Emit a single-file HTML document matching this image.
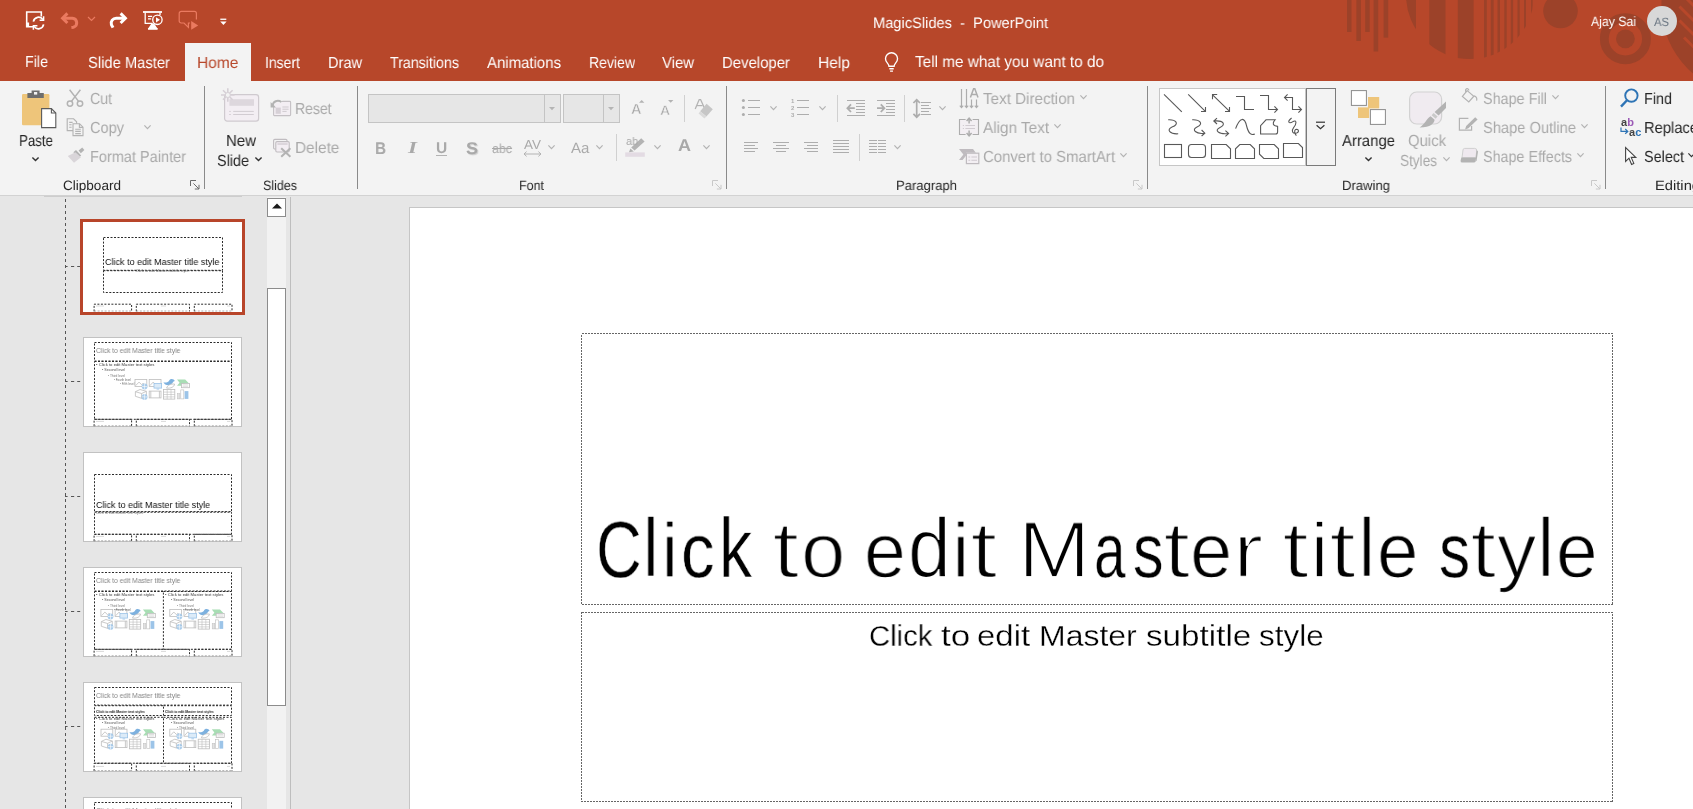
<!DOCTYPE html>
<html><head><meta charset="utf-8"><title>MagicSlides - PowerPoint</title>
<style>
html,body{margin:0;padding:0;}
body{width:1693px;height:809px;overflow:hidden;background:#E6E6E6;font-family:"Liberation Sans",sans-serif;}
#root{position:relative;width:1693px;height:809px;overflow:hidden;}
.a{position:absolute;}
.t,.t2{will-change:transform;position:absolute;white-space:nowrap;line-height:1;transform-origin:0 50%;display:inline-block;}
.sep{position:absolute;width:1px;background:#8a8a8a;top:86px;height:103px;}
.msep{position:absolute;width:1px;background:#d0d0d0;}
svg{position:absolute;overflow:visible;}
.gp{text-rendering:geometricPrecision;}
</style></head><body><div id="root">
<div class="a" style="left:0;top:0;width:1693px;height:81px;background:#B7472A;"></div>
<div class="a" style="left:0;top:81px;width:1693px;height:114px;background:#F3F3F3;"></div>
<div class="a" style="left:0;top:195px;width:1693px;height:1px;background:#d2d2d2;z-index:2;"></div>
<div class="a" style="left:185px;top:43px;width:66px;height:39px;background:#F3F3F3;"></div>
<div class="sep" style="left:204px;"></div>
<div class="sep" style="left:357px;"></div>
<div class="sep" style="left:726px;"></div>
<div class="sep" style="left:1147px;"></div>
<div class="sep" style="left:1605px;"></div>
<div class="a" style="left:0;top:195px;width:1693px;height:614px;background:#E6E6E6;"></div>
<div class="a" style="left:409px;top:207px;width:1290px;height:610px;background:#fff;border:1px solid #c6c6c6;box-sizing:border-box;"></div>
<svg style="left:0;top:0" width="1693" height="809" fill="none" stroke="#666" stroke-width="1" shape-rendering="crispEdges"><rect x="581.5" y="333.5" width="1031" height="271" stroke-dasharray="2 1"/><rect x="581.5" y="612.5" width="1031" height="189" stroke-dasharray="2 1"/></svg>
<div class="a" style="left:290px;top:197px;width:1px;height:612px;background:#bebebe;"></div>
<div class="a" style="left:267px;top:197px;width:19px;height:612px;background:#f2f2f2;"></div>
<div class="a" style="left:267px;top:198px;width:19px;height:19px;background:#fff;border:1px solid #8c8c8c;box-sizing:border-box;"></div>
<svg style="left:271.6px;top:203px" width="10" height="6"><path d="M0 5.6 L5 0.4 L10 5.6Z" fill="#1a1a1a"/></svg>
<div class="a" style="left:267px;top:288px;width:19px;height:417.6px;background:#fff;border:1px solid #8c8c8c;box-sizing:border-box;"></div>
<svg style="left:1300px;top:0" width="393" height="81" viewBox="1300 0 393 81"><g fill="#9C4229"><rect x="1347" y="0" width="4.5" height="32"/><rect x="1356.4" y="0" width="4.5" height="41"/><rect x="1365.2" y="0" width="4.5" height="32"/><rect x="1373.6" y="0" width="4.6" height="51.5"/><rect x="1383.6" y="0" width="4.6" height="37.6"/><clipPath id="cc"><circle cx="1470" cy="-5" r="64"/></clipPath><g clip-path="url(#cc)"><rect x="1400" y="0" width="16.0" height="70"/><rect x="1429.3" y="0" width="16.2" height="70"/><rect x="1457.8" y="0" width="15.8" height="70"/><rect x="1484" y="0" width="2.8" height="70"/><rect x="1490.8" y="0" width="2.8" height="70"/><rect x="1497.5" y="0" width="2.5" height="70"/><rect x="1504.3" y="0" width="2.4" height="70"/><rect x="1510.8" y="0" width="2.3" height="70"/><rect x="1517.5" y="0" width="2.2" height="70"/><rect x="1524" y="0" width="2.0" height="70"/><rect x="1531" y="0" width="1.7" height="70"/></g><circle cx="1560.5" cy="11" r="17.3"/><circle cx="1625.4" cy="38.8" r="21.1" fill="none" stroke="#9C4229" stroke-width="8.8"/><circle cx="1625.4" cy="38.8" r="9.4"/><clipPath id="c2"><rect x="1640" y="0" width="53" height="81"/></clipPath><g clip-path="url(#c2)"><circle cx="1751.4" cy="5" r="90"/><g stroke="#B7472A" stroke-width="3"><line x1="1686" y1="-2" x2="1700" y2="12"/><line x1="1679.5" y1="6.5" x2="1700" y2="27"/><line x1="1679.5" y1="20.5" x2="1700" y2="41"/><line x1="1684" y1="37.5" x2="1700" y2="53.5"/></g></g></g></svg>
<div class="a" style="left:1646.5px;top:5.5px;width:30.5px;height:30.5px;border-radius:50%;background:#D8D8D8;"></div>
<svg style="left:25px;top:11px" width="22" height="20" viewBox="0 0 22 20" fill="none" stroke="#ffffff" stroke-width="1.4">
<path d="M8 15.8 H1.7 V1 H16.3 V5.6" stroke-width="1.6"/><path d="M2.6 11.5 V15.8" stroke-width="3"/>
<path d="M8.4 10.6 A5.2 5.2 0 0 1 17.9 8.6" stroke-width="1.7"/><path d="M18.6 5.2 V9.2 H14.6" stroke-width="1.5"/>
<path d="M18.6 13.4 A5.2 5.2 0 0 1 9.1 15.4" stroke-width="1.7"/><path d="M8.4 18.8 V14.8 H12.4" stroke-width="1.5"/>
</svg>
<svg style="left:60px;top:12px" width="20" height="17" viewBox="0 0 20 17" fill="none" stroke="#EA7A60" stroke-width="3">
<path d="M7.4 1.4 L2.6 6.2 L7.4 11"/><path d="M3.4 6.2 H12.4 A4.6 4.6 0 0 1 13.4 15.2 L11.4 15.4"/></svg>
<svg style="left:87px;top:16px" width="9" height="6" viewBox="0 0 9 6" fill="none" stroke="#EA7A60" stroke-width="1.2"><path d="M1 1 L4.5 4.5 L8 1"/></svg>
<svg style="left:108px;top:12px" width="20" height="17" viewBox="0 0 20 17" fill="none" stroke="#ffffff" stroke-width="3">
<path d="M12.6 1.4 L17.4 6.2 L12.6 11"/><path d="M16.6 6.2 H8.2 A5 5 0 0 0 3.4 12.6 L5 15.6"/></svg>
<svg style="left:142px;top:11px" width="22" height="20" viewBox="0 0 22 20" fill="none" stroke="#ffffff" stroke-width="1.3">
<path d="M1 1 H20" stroke-width="1.8"/><path d="M3.2 1.6 V12.4 H10.6"/><path d="M18 1.6 V4"/>
<path d="M6 5.4 H10.2 M6 7.8 H9.2"/>
<circle cx="15.4" cy="8.8" r="4.7"/><path d="M14 6.2 L18 8.8 L14 11.4Z" fill="#ffffff" stroke="none"/>
<path d="M10.2 12.6 L7 17.4 H14.6 L11.4 12.6" fill="#ffffff"/><path d="M6 18 H15.6" stroke-width="1.6"/></svg>
<svg style="left:178px;top:10px" width="22" height="21" viewBox="0 0 22 21" fill="none" stroke="#EA7A60" stroke-width="1.2">
<path d="M12 13 H10.4 V17.4 L6 13 H3.2 A2 2 0 0 1 1.2 11 V3.4 A2 2 0 0 1 3.2 1.4 H16.4 A2 2 0 0 1 18.4 3.4 V9.6"/>
<path d="M13.2 11 L20.2 15.4 L13.2 19.8Z" fill="#EA7A60" stroke="none"/></svg>
<svg style="left:220px;top:18px" width="7" height="8" viewBox="0 0 7 8"><rect x="0.3" y="0.6" width="6" height="1.3" fill="#ffffff"/><path d="M0.2 3.6 H6.6 L3.4 7Z" fill="#ffffff"/></svg>
<svg style="left:883.6px;top:52px" width="15.6" height="21" viewBox="0 0 17 23" fill="none" stroke="#ffffff" stroke-width="1.5">
<path d="M5.4 15.6 C5.4 12.6 1.6 11.6 1.6 7.4 A6.6 6.6 0 0 1 14.8 7.4 C14.8 11.6 11 12.6 11 15.6 Z"/><path d="M5.8 18.4 H10.6 M6.6 21 H9.8"/></svg>
<svg style="left:20px;top:88px" width="38" height="42" viewBox="0 0 38 42">
<rect x="2" y="6" width="27.4" height="31.2" rx="1.2" fill="#EEC57A"/>
<path d="M7.4 10 V5 H11.6 V2.4 H19.6 V5 H23.8 V10Z" fill="#6E6E6E"/><rect x="14" y="4" width="3.2" height="2.6" fill="#F3F3F3"/>
<path d="M21.6 20.6 H31.4 L35.8 25 V39.6 H21.6Z" fill="#fff" stroke="#5A5A5A" stroke-width="1.1"/><path d="M31.4 20.6 V25 H35.8" fill="none" stroke="#5A5A5A" stroke-width="1.1"/>
</svg>
<svg style="left:31.9px;top:157.1px" width="7" height="4.6" viewBox="0 0 7 4.6" fill="none" stroke="#333" stroke-width="1.4"><path d="M0.4 0.4 L3.5 3.6 L6.6 0.4"/></svg>
<svg style="left:66px;top:89px" width="18" height="19" viewBox="0 0 18 19" fill="none" stroke="#B3B3B3" stroke-width="1.5">
<path d="M3.6 0.8 L12.6 12.4 M14.4 0.8 L5.4 12.4"/><circle cx="4" cy="14.6" r="2.7"/><circle cx="14" cy="14.6" r="2.7"/></svg>
<svg style="left:66px;top:118px" width="19" height="19" viewBox="0 0 19 19" fill="#F3F3F3" stroke="#B3B3B3" stroke-width="1.1">
<path d="M1.2 0.8 H7.6 L10.6 3.8 V12.6 H1.2Z"/><path d="M3.2 4.4 H6.6 M3.2 6.8 H5.6 M3.2 9.2 H5.6" />
<path d="M7 5.8 H13.6 L17 9.2 V17.6 H7Z"/><path d="M13.4 5.8 V9.4 H17" fill="none"/><path d="M9.2 11.2 H14.8 M9.2 13.4 H14.8 M9.2 15.6 H14.8"/></svg>
<svg style="left:143.8px;top:125.1px" width="7" height="4.6" viewBox="0 0 7 4.6" fill="none" stroke="#B3B3B3" stroke-width="1.2"><path d="M0.4 0.4 L3.5 3.6 L6.6 0.4"/></svg>
<svg style="left:67px;top:147px" width="18" height="17" viewBox="0 0 18 17">
<path d="M11.6 3.6 L15.2 0.6 L17.4 3 L13.8 6.2Z" fill="#B3B3B3"/><path d="M6.4 5.2 L9 3 L14.2 8.6 L11.6 10.8Z" fill="#B3B3B3"/>
<path d="M8.4 5.2 L14 10.2 L7 15.8 L0.8 9Z" fill="#D9D5D9"/></svg>
<svg style="left:190px;top:180px" width="10" height="10" viewBox="0 0 10 10" fill="none" stroke="#6a6a6a" stroke-width="1"><path d="M0.5 6 V0.5 H6"/><path d="M3.4 3.4 L9 9 M9 4.8 V9 H4.8"/></svg>
<svg style="left:220px;top:87px" width="41" height="36" viewBox="0 0 41 36">
<rect x="4.6" y="7.6" width="34" height="26.6" rx="2.6" fill="#F3EEF3" stroke="#CFCACF" stroke-width="1.2"/>
<rect x="9.4" y="12.2" width="24.6" height="6.6" fill="#DDD7DD"/>
<path d="M9.2 24.4 H10.8 M13.2 24.4 H33.8 M9.2 27.5 H10.8 M13.2 27.5 H33.8" stroke="#D2CCD2" stroke-width="1"/>
<g stroke="#D6D0D6" stroke-width="1.6"><path d="M7.8 1.2 V14.8 M1 8 H14.6 M3 3.2 L12.6 12.8 M12.6 3.2 L3 12.8"/></g><circle cx="7.8" cy="8" r="2.5" fill="#F3F3F3" stroke="#D6D0D6" stroke-width="1"/>
</svg>
<svg style="left:254.9px;top:157.1px" width="7" height="4.6" viewBox="0 0 7 4.6" fill="none" stroke="#333" stroke-width="1.4"><path d="M0.4 0.4 L3.5 3.6 L6.6 0.4"/></svg>
<svg style="left:270px;top:98px" width="22" height="19" viewBox="0 0 22 19" fill="none" stroke="#B3B3B3" stroke-width="1.1">
<rect x="3.6" y="3.4" width="17" height="14.2" rx="0.8" fill="#F3EEF3" stroke="#C4C0C4"/>
<rect x="5.6" y="9.6" width="5.2" height="6.2" fill="#D6D0D6" stroke="none"/>
<path d="M12.4 9 H18.6 M12.4 11.2 H18.6 M12.4 13.4 H16.6" stroke="#CFCACF" stroke-width="1"/>
<path d="M2.4 7.2 C2.8 2.8 7.6 0.8 11.6 3.6" stroke="#F3F3F3" stroke-width="4"/>
<path d="M2.6 7.6 C3 3.4 7.6 1.4 11.4 4" stroke-width="1.9"/><path d="M0.6 4 V9.4 H6Z" fill="#B3B3B3" stroke="none"/></svg>
<svg style="left:272px;top:138px" width="21" height="20" viewBox="0 0 21 20" fill="none" stroke="#C0BCC0" stroke-width="1.1">
<rect x="1.6" y="1.4" width="13.4" height="9.6" rx="1.2" fill="#F3F3F3"/>
<rect x="3.8" y="3.6" width="13.4" height="10.4" rx="1.2" fill="#F3EEF3"/><path d="M5.4 6 H15.6" stroke="#D6D0D6" stroke-width="1.6"/>
<path d="M9.2 10.2 L18.4 18.8 M18.4 10.2 L9.2 18.8" stroke="#B3B3B3" stroke-width="2"/></svg>
<div class="a" style="left:368px;top:94px;width:191px;height:26.5px;background:#E6E6E6;border:1px solid #C4C4C4;"></div>
<div class="a" style="left:544px;top:95px;width:1px;height:26.5px;background:#C4C4C4;"></div>
<div class="a" style="left:563px;top:94px;width:55px;height:26.5px;background:#E6E6E6;border:1px solid #C4C4C4;"></div>
<div class="a" style="left:603px;top:95px;width:1px;height:26.5px;background:#C4C4C4;"></div>
<svg style="left:548.9px;top:107.4px" width="6" height="3.4" viewBox="0 0 6 3.4"><path d="M0 0 H6 L3 3.2Z" fill="#B4B4B4"/></svg>
<svg style="left:607.9px;top:107.4px" width="6" height="3.4" viewBox="0 0 6 3.4"><path d="M0 0 H6 L3 3.2Z" fill="#B4B4B4"/></svg>
<svg style="left:639.4px;top:99.6px" width="5.4" height="2.8"><path d="M0 2.8 L2.7 0 L5.4 2.8Z" fill="#B3B3B3"/></svg>
<svg style="left:668.2px;top:100.2px" width="5.4" height="2.8"><path d="M0 0 H5.4 L2.7 2.8Z" fill="#B3B3B3"/></svg>
<div class="msep" style="left:684px;top:95px;height:27px;"></div>
<svg style="left:694px;top:98px" width="20" height="21" viewBox="0 0 20 21">
<path d="M1.2 11 L5.2 1.6 H6.6 L10.4 10" fill="none" stroke="#B3B3B3" stroke-width="1.3"/><path d="M3 7.6 H8.6" stroke="#B3B3B3" stroke-width="1.2"/>
<path d="M12.6 5.8 L18.8 11.2 L12.4 18.6 L6.2 13.2Z" fill="#C6C6C6"/><path d="M6.2 13.2 L12.4 18.6 L10.4 20.6 L4.6 15.4Z" fill="#DADADA"/></svg>
<div class="a" style="left:436px;top:155.2px;width:11px;height:1.2px;background:#B3B3B3;"></div>
<svg style="left:523px;top:150.6px" width="19" height="6" viewBox="0 0 19 6" fill="none" stroke="#B3B3B3" stroke-width="1"><path d="M1 3 H18 M3.6 0.6 L1 3 L3.6 5.4 M15.4 0.6 L18 3 L15.4 5.4"/></svg>
<svg style="left:547.9px;top:144.9px" width="7" height="4.6" viewBox="0 0 7 4.6" fill="none" stroke="#B3B3B3" stroke-width="1.2"><path d="M0.4 0.4 L3.5 3.6 L6.6 0.4"/></svg>
<svg style="left:595.8px;top:144.9px" width="7" height="4.6" viewBox="0 0 7 4.6" fill="none" stroke="#B3B3B3" stroke-width="1.2"><path d="M0.4 0.4 L3.5 3.6 L6.6 0.4"/></svg>
<div class="msep" style="left:616px;top:134px;height:27px;"></div>
<svg style="left:625px;top:137px" width="21" height="21" viewBox="0 0 21 21">
<rect x="0.2" y="15.4" width="19.6" height="4.4" fill="#E3DBE3"/>
<path d="M16.2 1.2 L19.6 4.4 L9.6 13.6 L6.2 10.6Z" fill="#B3B3B3"/><path d="M5.4 11.4 L8.8 14.4 L4 15.2Z" fill="#B3B3B3"/></svg>
<svg style="left:653.5px;top:144.9px" width="7" height="4.6" viewBox="0 0 7 4.6" fill="none" stroke="#B3B3B3" stroke-width="1.2"><path d="M0.4 0.4 L3.5 3.6 L6.6 0.4"/></svg>
<svg style="left:702.7px;top:144.9px" width="7" height="4.6" viewBox="0 0 7 4.6" fill="none" stroke="#B3B3B3" stroke-width="1.2"><path d="M0.4 0.4 L3.5 3.6 L6.6 0.4"/></svg>
<svg style="left:712px;top:180px" width="10" height="10" viewBox="0 0 10 10" fill="none" stroke="#C8C8C8" stroke-width="1"><path d="M0.5 6 V0.5 H6"/><path d="M3.4 3.4 L9 9 M9 4.8 V9 H4.8"/></svg>
<svg style="left:0;top:0" width="1693" height="200" fill="none" stroke="#ADADAD" stroke-width="1" shape-rendering="crispEdges"><path d="M748 100.5 H760 M748 107.5 H760 M748 114.5 H760"/></svg>
<svg style="left:0;top:0" width="800" height="200" fill="#ADADAD"><circle cx="743.4" cy="100.5" r="1.5"/><circle cx="743.4" cy="107.5" r="1.5"/><circle cx="743.4" cy="114.5" r="1.5"/></svg>
<svg style="left:769.8px;top:106.1px" width="7" height="4.6" viewBox="0 0 7 4.6" fill="none" stroke="#B3B3B3" stroke-width="1.2"><path d="M0.4 0.4 L3.5 3.6 L6.6 0.4"/></svg>
<svg style="left:0;top:0" width="1693" height="200" fill="none" stroke="#ADADAD" stroke-width="1" shape-rendering="crispEdges"><path d="M797 100.5 H809 M797 107.5 H809 M797 114.5 H809"/></svg>
<span class="t2" style="left:790.6px;top:97.8px;font-size:6px;color:#ADADAD;font-weight:bold;">1</span>
<span class="t2" style="left:790.6px;top:104.8px;font-size:6px;color:#ADADAD;font-weight:bold;">2</span>
<span class="t2" style="left:790.6px;top:111.8px;font-size:6px;color:#ADADAD;font-weight:bold;">3</span>
<svg style="left:818.8px;top:106.1px" width="7" height="4.6" viewBox="0 0 7 4.6" fill="none" stroke="#B3B3B3" stroke-width="1.2"><path d="M0.4 0.4 L3.5 3.6 L6.6 0.4"/></svg>
<div class="msep" style="left:837px;top:95px;height:27px;"></div>
<svg style="left:0;top:0" width="1693" height="200" fill="none" stroke="#ADADAD" stroke-width="1" shape-rendering="crispEdges"><path d="M847 100.5 H865 M856 103.5 H865 M856 106.5 H865 M856 109.5 H865 M856 112.5 H865 M847 115.5 H865"/></svg>
<svg style="left:846px;top:103px" width="10" height="11" viewBox="0 0 10 11" fill="none" stroke="#ADADAD" stroke-width="1.8"><path d="M8.8 5.2 H2 M5 1.4 L1.4 5.2 L5 9"/></svg>
<svg style="left:0;top:0" width="1693" height="200" fill="none" stroke="#ADADAD" stroke-width="1" shape-rendering="crispEdges"><path d="M877 100.5 H895 M886 103.5 H895 M886 106.5 H895 M886 109.5 H895 M886 112.5 H895 M877 115.5 H895"/></svg>
<svg style="left:876px;top:103px" width="10" height="11" viewBox="0 0 10 11" fill="none" stroke="#ADADAD" stroke-width="1.8"><path d="M1 5.2 H7.8 M4.8 1.4 L8.4 5.2 L4.8 9"/></svg>
<div class="msep" style="left:904px;top:95px;height:27px;"></div>
<svg style="left:0;top:0" width="1693" height="200" fill="none" stroke="#ADADAD" stroke-width="1" shape-rendering="crispEdges"><path d="M921 102.5 H931 M921 105.5 H929 M921 108.5 H931 M921 111.5 H929 M921 114.5 H931"/></svg>
<svg style="left:912px;top:98px" width="10" height="21" viewBox="0 0 10 21" fill="none" stroke="#ADADAD" stroke-width="1.7"><path d="M4.7 1.8 V19 M1.4 5 L4.7 1.6 L8 5 M1.4 15.8 L4.7 19.2 L8 15.8"/></svg>
<svg style="left:938.8px;top:106.1px" width="7" height="4.6" viewBox="0 0 7 4.6" fill="none" stroke="#B3B3B3" stroke-width="1.2"><path d="M0.4 0.4 L3.5 3.6 L6.6 0.4"/></svg>
<svg style="left:0;top:0" width="1000" height="200" fill="none" stroke="#ADADAD" stroke-width="1.2">
<path d="M961.5 89 V107 M966.5 89 V107 M971.5 99.4 V107 M976.5 99.4 V107"/>
<path d="M959.8 105.6 L961.5 107.6 L963.2 105.6 M964.8 105.6 L966.5 107.6 L968.2 105.6 M969.8 105.6 L971.5 107.6 L973.2 105.6 M974.8 105.6 L976.5 107.6 L978.2 105.6" stroke-width="1.1"/>
<path d="M970.4 97.6 L973.6 88.8 H974.8 L978 97.6 M971.6 94.6 H976.8" stroke-width="1.5"/></svg>
<svg style="left:0;top:0" width="1000" height="200" fill="none" stroke="#ADADAD" stroke-width="1.1">
<rect x="959.5" y="119.5" width="19" height="15" fill="#F3EFF3" stroke="none"/>
<path d="M965.6 119.5 H959.5 V134.5 H965.6 M972.6 119.5 H978.5 V134.5 H972.6"/>
<path d="M969.1 118.4 V123.6 M966.6 121 L969.1 118.2 L971.6 121 M969.1 135.6 V130.4 M966.6 133 L969.1 135.8 L971.6 133" stroke-width="1.5"/>
<path d="M962.8 125.5 H964 M965.4 125.5 H975 M962.8 128.5 H964 M965.4 128.5 H975" stroke="#D2CCD2" stroke-width="1"/></svg>
<svg style="left:0;top:0" width="1000" height="200">
<path d="M959 149.1 H973 L975.8 152.8 H966 V155.8 L962.6 159.9 H959 L963.4 154.4Z" fill="#BFBBBF"/>
<rect x="966.4" y="153.2" width="12.4" height="10.4" fill="#F3EFF3" stroke="#BFBBBF" stroke-width="1.2"/>
<path d="M968.4 157 H970.2 M971.4 157 H977 M968.4 160.2 H970.2 M971.4 160.2 H977" stroke="#CFC9CF" stroke-width="1.1" fill="none"/></svg>
<svg style="left:1079.7px;top:95.3px" width="7" height="4.6" viewBox="0 0 7 4.6" fill="none" stroke="#B3B3B3" stroke-width="1.2"><path d="M0.4 0.4 L3.5 3.6 L6.6 0.4"/></svg>
<svg style="left:1054.1px;top:124.3px" width="7" height="4.6" viewBox="0 0 7 4.6" fill="none" stroke="#B3B3B3" stroke-width="1.2"><path d="M0.4 0.4 L3.5 3.6 L6.6 0.4"/></svg>
<svg style="left:1120.3px;top:153.3px" width="7" height="4.6" viewBox="0 0 7 4.6" fill="none" stroke="#B3B3B3" stroke-width="1.2"><path d="M0.4 0.4 L3.5 3.6 L6.6 0.4"/></svg>
<svg style="left:0;top:0" width="1693" height="200" fill="none" stroke="#ADADAD" stroke-width="1" shape-rendering="crispEdges"><path d="M744 142.5 H758 M744 145.5 H755 M744 148.5 H758 M744 151.5 H755"/></svg>
<svg style="left:0;top:0" width="1693" height="200" fill="none" stroke="#ADADAD" stroke-width="1" shape-rendering="crispEdges"><path d="M773 142.5 H789 M776 145.5 H786 M773 148.5 H789 M776 151.5 H786"/></svg>
<svg style="left:0;top:0" width="1693" height="200" fill="none" stroke="#ADADAD" stroke-width="1" shape-rendering="crispEdges"><path d="M804 142.5 H818 M807 145.5 H818 M804 148.5 H818 M807 151.5 H818"/></svg>
<svg style="left:0;top:0" width="1693" height="200" fill="none" stroke="#ADADAD" stroke-width="1" shape-rendering="crispEdges"><path d="M833 140.5 H849 M833 143.5 H849 M833 146.5 H849 M833 149.5 H849 M833 152.5 H849"/></svg>
<div class="msep" style="left:859px;top:134px;height:27px;"></div>
<svg style="left:0;top:0" width="1693" height="200" fill="none" stroke="#ADADAD" stroke-width="1" shape-rendering="crispEdges"><path d="M869 140.5 H877 M869 143.5 H877 M869 146.5 H877 M869 149.5 H877 M869 152.5 H877 M878 140.5 H886 M878 143.5 H886 M878 146.5 H886 M878 149.5 H886 M878 152.5 H886"/></svg>
<svg style="left:893.9px;top:145.1px" width="7" height="4.6" viewBox="0 0 7 4.6" fill="none" stroke="#B3B3B3" stroke-width="1.2"><path d="M0.4 0.4 L3.5 3.6 L6.6 0.4"/></svg>
<svg style="left:1133px;top:180px" width="10" height="10" viewBox="0 0 10 10" fill="none" stroke="#C8C8C8" stroke-width="1"><path d="M0.5 6 V0.5 H6"/><path d="M3.4 3.4 L9 9 M9 4.8 V9 H4.8"/></svg>
<div class="a" style="left:1159px;top:88px;width:147px;height:78px;background:#fff;border:1px solid #C6C6C6;box-sizing:border-box;"></div>
<div class="a" style="left:1305.5px;top:88px;width:30px;height:77.5px;background:#F3F3F3;border:1px solid #7a7a7a;box-sizing:border-box;"></div>
<svg style="left:1315px;top:121px" width="11" height="9" viewBox="0 0 11 9" fill="none" stroke="#333" stroke-width="1.2"><path d="M1 1.2 H10"/><path d="M1.6 4.2 L5.5 7.8 L9.4 4.2"/></svg>
<svg style="left:1159px;top:88px" width="147" height="77" viewBox="1159 88 147 77" fill="none" stroke="#585858" stroke-width="1.1"><path d="M1164 94.4 L1181.8 111.8"/><path d="M1188.2 94.4 L1205.6 111.6 M1205.5 107 V111.5 H1201"/><path d="M1212.6 94.8 L1229.6 111.4 M1229.5 107 V111.5 H1225 M1212.5 99.2 V94.5 H1217.2"/><path d="M1236 96.5 H1244.5 V109.5 H1254"/><path d="M1260 95.5 H1268.5 V109.5 H1277 M1274.4 106.4 L1277.5 109.5 L1274.4 112.6"/><path d="M1284.6 97.5 H1292.5 V109.5 H1301 M1298.4 106.4 L1301.5 109.5 L1298.4 112.6 M1287.6 94.4 L1284.5 97.5 L1287.6 100.6"/><path d="M1168.2 119.8 C1176 119.4 1180 124 1172 127 C1166 129.6 1170 134.4 1178.2 133.8"/><path d="M1192.2 119.8 C1200 119.4 1204 124 1197 127 C1191 129.6 1196 134.4 1204.6 133.2 M1201.6 130 L1204.8 133.2 L1201.6 136"/><path d="M1214 121 C1224 120 1226 125 1220 127.4 C1214 130 1218 134.6 1228.4 133.6 M1225.4 130.6 L1228.6 133.6 L1225.4 136.4 M1217 118.2 L1213.8 121 L1217 124"/><path d="M1235.6 128.6 C1240 116.6 1244.6 117 1246.6 126 C1248.6 134 1251.6 135.6 1254.8 134"/><path d="M1260.6 134 V125.6 L1266 119.8 H1275 C1272 123 1272.6 126 1277.6 126.4 V132 Q1277.6 134 1275.6 134Z"/><path d="M1291.6 118 C1286.6 122 1289 124 1293 121.6 C1297 119.4 1296.6 124 1293.6 127.6 C1291 131 1292.6 134 1296.6 133 C1299.6 132 1298.6 128.4 1295.6 129.6 C1294 130.4 1294.6 133.6 1296.4 135.6"/><rect x="1164.5" y="144.5" width="17" height="13"/><rect x="1188.5" y="144.5" width="17" height="13" rx="3"/><path d="M1211.5 144.5 H1226.2 L1230.5 148.8 V158.5 H1211.5Z"/><path d="M1239.8 144.5 H1250.2 L1254.5 148.8 V158.5 H1235.5 V148.8Z"/><path d="M1259.5 144.5 H1274.2 L1278.5 148.8 V158.5 H1263.8 L1259.5 154.2Z"/><path d="M1283.5 157.5 V143.5 H1298.4 L1302.5 147.6 V157.5Z"/></svg>
<svg style="left:1350px;top:89px" width="37" height="37" viewBox="1350 89 37 37">
<rect x="1368" y="97" width="11.2" height="11.4" fill="#EEC57A"/><rect x="1358" y="107.4" width="11.2" height="10.6" fill="#EEC57A"/>
<rect x="1351.4" y="90.6" width="15" height="14.8" fill="#fff" stroke="#8a8a8a" stroke-width="1"/>
<rect x="1370.4" y="109.6" width="15" height="14.8" fill="#fff" stroke="#8a8a8a" stroke-width="1"/></svg>
<svg style="left:1364.9px;top:157.1px" width="7" height="4.6" viewBox="0 0 7 4.6" fill="none" stroke="#333" stroke-width="1.4"><path d="M0.4 0.4 L3.5 3.6 L6.6 0.4"/></svg>
<svg style="left:1408px;top:90px" width="40" height="40" viewBox="1408 90 40 40">
<rect x="1409.6" y="92" width="32" height="32" rx="7" fill="#F0EBF0" stroke="#D2D2D2" stroke-width="1.2"/>
<path d="M1446 101.6 V108 L1438.6 115.6 L1434.6 112 Z" fill="#B3B3B3"/>
<path d="M1433.6 113 L1437.6 116.6 L1435.6 118.8 L1431.6 115.2Z" fill="#C9C9C9"/>
<path d="M1430.6 116.2 L1434.6 119.8 C1434 123.6 1431 127.4 1419.6 127.4 C1424.6 124.6 1426.6 118.6 1430.6 116.2Z" fill="#B3B3B3"/></svg>
<svg style="left:1443.1px;top:157.1px" width="7" height="4.6" viewBox="0 0 7 4.6" fill="none" stroke="#B3B3B3" stroke-width="1.2"><path d="M0.4 0.4 L3.5 3.6 L6.6 0.4"/></svg>
<svg style="left:1461px;top:87px" width="18" height="18" viewBox="0 0 18 18" fill="none" stroke="#B3B3B3" stroke-width="1.2">
<path d="M6.2 3.6 L12.8 9.2 L7.8 15 L1.4 9.4Z"/><path d="M5 5.2 C3.6 1.6 6.6 0.2 8 3.4"/><path d="M13 8.8 C15.6 9.4 16.2 11.6 15.6 13.6" /></svg>
<svg style="left:1458px;top:116px" width="21" height="17" viewBox="0 0 21 17" fill="none" stroke="#B3B3B3" stroke-width="1.2">
<path d="M10.4 2.4 H1.4 V14.2 H13.6 V10"/><path d="M17.2 1.2 L19.6 3.4 L10.4 12.2 L7 13.6 L8.2 10Z" fill="#B3B3B3" stroke="none"/></svg>
<svg style="left:1459px;top:147px" width="20" height="17" viewBox="0 0 20 17">
<path d="M5.6 1.4 H15.6 Q18.2 1.4 17.8 4 L16.8 10.8 L3 10.8 L4 3 Q4.2 1.4 5.6 1.4Z" fill="#EFE9EF" stroke="#CFCFCF" stroke-width="1"/>
<path d="M2.4 10.4 H17.2 L16.6 14 Q16.4 15.6 14.8 15.6 H3.4 Q1.2 15.6 1.6 13.4Z" fill="#B3B3B3"/><path d="M17.6 3 L19 4.6 L17.6 13.6 L16.4 15Z" fill="#B3B3B3"/></svg>
<svg style="left:1551.9px;top:95.3px" width="7" height="4.6" viewBox="0 0 7 4.6" fill="none" stroke="#B3B3B3" stroke-width="1.2"><path d="M0.4 0.4 L3.5 3.6 L6.6 0.4"/></svg>
<svg style="left:1580.9px;top:124.3px" width="7" height="4.6" viewBox="0 0 7 4.6" fill="none" stroke="#B3B3B3" stroke-width="1.2"><path d="M0.4 0.4 L3.5 3.6 L6.6 0.4"/></svg>
<svg style="left:1576.9px;top:153.3px" width="7" height="4.6" viewBox="0 0 7 4.6" fill="none" stroke="#B3B3B3" stroke-width="1.2"><path d="M0.4 0.4 L3.5 3.6 L6.6 0.4"/></svg>
<svg style="left:1591px;top:180px" width="10" height="10" viewBox="0 0 10 10" fill="none" stroke="#C8C8C8" stroke-width="1"><path d="M0.5 6 V0.5 H6"/><path d="M3.4 3.4 L9 9 M9 4.8 V9 H4.8"/></svg>
<svg style="left:1619px;top:87px" width="22" height="22" viewBox="0 0 22 22" fill="none" stroke="#2E74B5" stroke-width="1.9">
<circle cx="12.4" cy="8.6" r="6.2"/><path d="M8 13.2 L2 19.6" stroke-width="2.4"/></svg>
<span class="t2" style="left:1621px;top:117.4px;font-size:11px;color:#444;font-weight:bold;">a<span style="color:#9B59B6">b</span></span>
<span class="t2" style="left:1628.6px;top:126.6px;font-size:11px;color:#444;font-weight:bold;">a<span style="color:#2E74B5">c</span></span>
<svg style="left:1620px;top:127px" width="9" height="8" viewBox="0 0 9 8" fill="none" stroke="#2E74B5" stroke-width="1.2"><path d="M1 0.4 V4.4 H7.6 M5.2 2 L7.8 4.4 L5.2 6.8"/></svg>
<svg style="left:1624px;top:146px" width="14" height="20" viewBox="0 0 14 20"><path d="M1.6 1.6 V15.4 L5 12.2 L7.6 18.4 L9.8 17.4 L7.2 11.4 H11.8Z" fill="#fff" stroke="#444" stroke-width="1.1"/></svg>
<svg style="left:1687.9px;top:153.3px" width="7" height="4.6" viewBox="0 0 7 4.6" fill="none" stroke="#333" stroke-width="1.2"><path d="M0.4 0.4 L3.5 3.6 L6.6 0.4"/></svg>
<div class="a" style="left:44px;top:196px;width:198px;height:1.4px;background:#CDCDCD;"></div>
<svg style="left:0;top:195px" width="300" height="614" viewBox="0 195 300 614" fill="none"><path d="M65.5 199 V809" stroke="#555" stroke-width="1" stroke-dasharray="3 3"/><path d="M65 266.5 H67.6 M71 266.5 H74.2 M77.2 266.5 H80.2" stroke="#555" stroke-width="1"/><path d="M65 381.5 H67.6 M71 381.5 H74.2 M77.2 381.5 H80.2" stroke="#555" stroke-width="1"/><path d="M65 496.5 H67.6 M71 496.5 H74.2 M77.2 496.5 H80.2" stroke="#555" stroke-width="1"/><path d="M65 611.5 H67.6 M71 611.5 H74.2 M77.2 611.5 H80.2" stroke="#555" stroke-width="1"/><path d="M65 726.5 H67.6 M71 726.5 H74.2 M77.2 726.5 H80.2" stroke="#555" stroke-width="1"/><rect x="81.5" y="220.5" width="162" height="93" fill="#fff" stroke="#B8452A" stroke-width="3"/><rect x="103.5" y="237.5" width="119.0" height="32.8" stroke="#2b2b2b" stroke-width="1" stroke-dasharray="2 1.5"/><rect x="103.5" y="270.7" width="119.0" height="21.8" stroke="#2b2b2b" stroke-width="1" stroke-dasharray="2 1.5"/><path d="M94.1 311.4 V304.2 H131.6 V311.4" stroke="#2b2b2b" stroke-width="1" stroke-dasharray="2 1.5"/><path d="M94.1 311.0 H131.6" stroke="#9a9a9a" stroke-width="0.8" stroke-dasharray="2 1.5"/><path d="M136.3 311.4 V304.2 H189.5 V311.4" stroke="#2b2b2b" stroke-width="1" stroke-dasharray="2 1.5"/><path d="M136.3 311.0 H189.5" stroke="#9a9a9a" stroke-width="0.8" stroke-dasharray="2 1.5"/><path d="M194.3 311.4 V304.2 H232 V311.4" stroke="#2b2b2b" stroke-width="1" stroke-dasharray="2 1.5"/><path d="M194.3 311.0 H232" stroke="#9a9a9a" stroke-width="0.8" stroke-dasharray="2 1.5"/><path d="M96 306 H104 M161 306 H166 M227 306 H230" stroke="#c8c8c8" stroke-width="0.7"/><rect x="83.5" y="337.5" width="158" height="89" fill="#fff" stroke="#C2C2C2" stroke-width="1"/><rect x="94.5" y="342.5" width="137.0" height="18.5" stroke="#2b2b2b" stroke-width="1" stroke-dasharray="2 1.5"/><rect x="94.5" y="361.5" width="137.0" height="57.8" stroke="#2b2b2b" stroke-width="1" stroke-dasharray="2 1.5"/><path d="M94.1 426.2 V419.29999999999995 H131.6 V426.2" stroke="#2b2b2b" stroke-width="1" stroke-dasharray="2 1.5"/><path d="M94.1 425.8 H131.6" stroke="#9a9a9a" stroke-width="0.8" stroke-dasharray="2 1.5"/><path d="M136.3 426.2 V419.29999999999995 H189.5 V426.2" stroke="#2b2b2b" stroke-width="1" stroke-dasharray="2 1.5"/><path d="M136.3 425.8 H189.5" stroke="#9a9a9a" stroke-width="0.8" stroke-dasharray="2 1.5"/><path d="M194.3 426.2 V419.29999999999995 H232 V426.2" stroke="#2b2b2b" stroke-width="1" stroke-dasharray="2 1.5"/><path d="M194.3 425.8 H232" stroke="#9a9a9a" stroke-width="0.8" stroke-dasharray="2 1.5"/><path d="M96 421.4 H104 M161 421.4 H166 M227 421.4 H230" stroke="#c8c8c8" stroke-width="0.7"/><g transform="translate(134.6 378.7)" stroke-width="0.8"><rect x="0.4" y="0.8" width="11.8" height="7" fill="#fff" stroke="#BDBDBD"/><path d="M1 7 L4.4 3.4 L7 6 L8.4 4.6 L11 7" stroke="#BDBDBD"/><circle cx="10" cy="7.8" r="2.9" fill="#9CC4E8" opacity="0.85"/><path d="M7.4 7.8 H12.6 M10 5 V10.6" stroke="#fff" stroke-width="0.6"/><rect x="14.6" y="0.8" width="11.8" height="7" fill="#fff" stroke="#BDBDBD"/><path d="M15.2 7 L18.6 3.4 L21 6" stroke="#BDBDBD"/><rect x="19.4" y="4.8" width="7.6" height="4.6" fill="#DCEBF8" stroke="#9CC4E8"/><path d="M22 10.4 H24.6" stroke="#9CC4E8"/><path d="M28.8 3.6 C30 6.4 33.4 7.4 36 6 C38.6 4.8 38 2.6 40.2 2.4 C39.4 0 35.4 -0.6 34.4 2.4 C32.6 4 30.6 4.2 28.8 3.6Z" fill="#6FA8DC" opacity="0.9"/><path d="M32 9.4 C33 6 36.6 5 40 5.4 C39.6 8.4 36 9.8 32 9.4Z" fill="#fff" stroke="#BDBDBD"/><path d="M42.4 0.8 H50.6 L54.2 4.6 H50 V7 H42.4 L45 4Z" fill="#A8DDB4"/><rect x="46.8" y="4.8" width="8" height="4.2" fill="#fff" stroke="#BDBDBD"/><path d="M48 6.2 H53.6 M48 7.6 H53.6" stroke="#BDBDBD" stroke-width="0.5"/><path d="M0.8 13 L5.4 10.8 L11.8 12.6 V17.4 L7 19.6 L0.8 17.6Z M0.8 13 L7 14.8 L11.8 12.6 M7 14.8 V19.6" fill="#fff" stroke="#BDBDBD"/><circle cx="10" cy="18.2" r="2.9" fill="#9CC4E8" opacity="0.85"/><path d="M7.4 18.2 H12.6 M10 15.4 V21" stroke="#fff" stroke-width="0.6"/><rect x="14.6" y="12.4" width="11.8" height="6.8" fill="#fff" stroke="#BDBDBD"/><path d="M16.2 12.4 V19.2 M24.8 12.4 V19.2" stroke="#BDBDBD"/><rect x="28.8" y="10.8" width="11.4" height="9.6" fill="#fff" stroke="#BDBDBD"/><path d="M28.8 13.4 H40.2 M28.8 15.8 H40.2 M28.8 18.2 H40.2 M32.6 10.8 V20.4 M36.4 10.8 V20.4" stroke="#BDBDBD" stroke-width="0.6"/><rect x="42.8" y="15" width="2.6" height="5.2" fill="#E2E2E2" stroke="#BDBDBD" stroke-width="0.5"/><rect x="46.2" y="11.2" width="3" height="9" fill="#fff" stroke="#BDBDBD" stroke-width="0.6"/><rect x="50" y="12.4" width="3.8" height="7.8" fill="#9CC4E8"/></g><rect x="83.5" y="452.5" width="158" height="89" fill="#fff" stroke="#C2C2C2" stroke-width="1"/><rect x="94.5" y="474.5" width="137.0" height="37.1" stroke="#2b2b2b" stroke-width="1" stroke-dasharray="2 1.5"/><rect x="94.5" y="512.2" width="137.0" height="22.1" stroke="#2b2b2b" stroke-width="1" stroke-dasharray="2 1.5"/><path d="M94.1 541.1999999999999 V534.3 H131.6 V541.1999999999999" stroke="#2b2b2b" stroke-width="1" stroke-dasharray="2 1.5"/><path d="M94.1 540.8 H131.6" stroke="#9a9a9a" stroke-width="0.8" stroke-dasharray="2 1.5"/><path d="M136.3 541.1999999999999 V534.3 H189.5 V541.1999999999999" stroke="#2b2b2b" stroke-width="1" stroke-dasharray="2 1.5"/><path d="M136.3 540.8 H189.5" stroke="#9a9a9a" stroke-width="0.8" stroke-dasharray="2 1.5"/><path d="M194.3 541.1999999999999 V534.3 H232 V541.1999999999999" stroke="#2b2b2b" stroke-width="1" stroke-dasharray="2 1.5"/><path d="M194.3 540.8 H232" stroke="#9a9a9a" stroke-width="0.8" stroke-dasharray="2 1.5"/><path d="M96 536.4 H104 M161 536.4 H166 M227 536.4 H230" stroke="#c8c8c8" stroke-width="0.7"/><rect x="83.5" y="567.5" width="158" height="89" fill="#fff" stroke="#C2C2C2" stroke-width="1"/><rect x="94.5" y="572.5" width="137.0" height="18.5" stroke="#2b2b2b" stroke-width="1" stroke-dasharray="2 1.5"/><rect x="94.5" y="591.5" width="68.9" height="57.8" stroke="#2b2b2b" stroke-width="1" stroke-dasharray="2 1.5"/><path d="M163.4 591.5 H231.5 V649.3 H163.4" stroke="#2b2b2b" stroke-width="1" stroke-dasharray="2 1.5"/><path d="M94.1 656.1999999999999 V649.3 H131.6 V656.1999999999999" stroke="#2b2b2b" stroke-width="1" stroke-dasharray="2 1.5"/><path d="M94.1 655.8 H131.6" stroke="#9a9a9a" stroke-width="0.8" stroke-dasharray="2 1.5"/><path d="M136.3 656.1999999999999 V649.3 H189.5 V656.1999999999999" stroke="#2b2b2b" stroke-width="1" stroke-dasharray="2 1.5"/><path d="M136.3 655.8 H189.5" stroke="#9a9a9a" stroke-width="0.8" stroke-dasharray="2 1.5"/><path d="M194.3 656.1999999999999 V649.3 H232 V656.1999999999999" stroke="#2b2b2b" stroke-width="1" stroke-dasharray="2 1.5"/><path d="M194.3 655.8 H232" stroke="#9a9a9a" stroke-width="0.8" stroke-dasharray="2 1.5"/><path d="M96 651.4 H104 M161 651.4 H166 M227 651.4 H230" stroke="#c8c8c8" stroke-width="0.7"/><g transform="translate(100.5 608.7)" stroke-width="0.8"><rect x="0.4" y="0.8" width="11.8" height="7" fill="#fff" stroke="#BDBDBD"/><path d="M1 7 L4.4 3.4 L7 6 L8.4 4.6 L11 7" stroke="#BDBDBD"/><circle cx="10" cy="7.8" r="2.9" fill="#9CC4E8" opacity="0.85"/><path d="M7.4 7.8 H12.6 M10 5 V10.6" stroke="#fff" stroke-width="0.6"/><rect x="14.6" y="0.8" width="11.8" height="7" fill="#fff" stroke="#BDBDBD"/><path d="M15.2 7 L18.6 3.4 L21 6" stroke="#BDBDBD"/><rect x="19.4" y="4.8" width="7.6" height="4.6" fill="#DCEBF8" stroke="#9CC4E8"/><path d="M22 10.4 H24.6" stroke="#9CC4E8"/><path d="M28.8 3.6 C30 6.4 33.4 7.4 36 6 C38.6 4.8 38 2.6 40.2 2.4 C39.4 0 35.4 -0.6 34.4 2.4 C32.6 4 30.6 4.2 28.8 3.6Z" fill="#6FA8DC" opacity="0.9"/><path d="M32 9.4 C33 6 36.6 5 40 5.4 C39.6 8.4 36 9.8 32 9.4Z" fill="#fff" stroke="#BDBDBD"/><path d="M42.4 0.8 H50.6 L54.2 4.6 H50 V7 H42.4 L45 4Z" fill="#A8DDB4"/><rect x="46.8" y="4.8" width="8" height="4.2" fill="#fff" stroke="#BDBDBD"/><path d="M48 6.2 H53.6 M48 7.6 H53.6" stroke="#BDBDBD" stroke-width="0.5"/><path d="M0.8 13 L5.4 10.8 L11.8 12.6 V17.4 L7 19.6 L0.8 17.6Z M0.8 13 L7 14.8 L11.8 12.6 M7 14.8 V19.6" fill="#fff" stroke="#BDBDBD"/><circle cx="10" cy="18.2" r="2.9" fill="#9CC4E8" opacity="0.85"/><path d="M7.4 18.2 H12.6 M10 15.4 V21" stroke="#fff" stroke-width="0.6"/><rect x="14.6" y="12.4" width="11.8" height="6.8" fill="#fff" stroke="#BDBDBD"/><path d="M16.2 12.4 V19.2 M24.8 12.4 V19.2" stroke="#BDBDBD"/><rect x="28.8" y="10.8" width="11.4" height="9.6" fill="#fff" stroke="#BDBDBD"/><path d="M28.8 13.4 H40.2 M28.8 15.8 H40.2 M28.8 18.2 H40.2 M32.6 10.8 V20.4 M36.4 10.8 V20.4" stroke="#BDBDBD" stroke-width="0.6"/><rect x="42.8" y="15" width="2.6" height="5.2" fill="#E2E2E2" stroke="#BDBDBD" stroke-width="0.5"/><rect x="46.2" y="11.2" width="3" height="9" fill="#fff" stroke="#BDBDBD" stroke-width="0.6"/><rect x="50" y="12.4" width="3.8" height="7.8" fill="#9CC4E8"/></g><g transform="translate(169.4 608.7)" stroke-width="0.8"><rect x="0.4" y="0.8" width="11.8" height="7" fill="#fff" stroke="#BDBDBD"/><path d="M1 7 L4.4 3.4 L7 6 L8.4 4.6 L11 7" stroke="#BDBDBD"/><circle cx="10" cy="7.8" r="2.9" fill="#9CC4E8" opacity="0.85"/><path d="M7.4 7.8 H12.6 M10 5 V10.6" stroke="#fff" stroke-width="0.6"/><rect x="14.6" y="0.8" width="11.8" height="7" fill="#fff" stroke="#BDBDBD"/><path d="M15.2 7 L18.6 3.4 L21 6" stroke="#BDBDBD"/><rect x="19.4" y="4.8" width="7.6" height="4.6" fill="#DCEBF8" stroke="#9CC4E8"/><path d="M22 10.4 H24.6" stroke="#9CC4E8"/><path d="M28.8 3.6 C30 6.4 33.4 7.4 36 6 C38.6 4.8 38 2.6 40.2 2.4 C39.4 0 35.4 -0.6 34.4 2.4 C32.6 4 30.6 4.2 28.8 3.6Z" fill="#6FA8DC" opacity="0.9"/><path d="M32 9.4 C33 6 36.6 5 40 5.4 C39.6 8.4 36 9.8 32 9.4Z" fill="#fff" stroke="#BDBDBD"/><path d="M42.4 0.8 H50.6 L54.2 4.6 H50 V7 H42.4 L45 4Z" fill="#A8DDB4"/><rect x="46.8" y="4.8" width="8" height="4.2" fill="#fff" stroke="#BDBDBD"/><path d="M48 6.2 H53.6 M48 7.6 H53.6" stroke="#BDBDBD" stroke-width="0.5"/><path d="M0.8 13 L5.4 10.8 L11.8 12.6 V17.4 L7 19.6 L0.8 17.6Z M0.8 13 L7 14.8 L11.8 12.6 M7 14.8 V19.6" fill="#fff" stroke="#BDBDBD"/><circle cx="10" cy="18.2" r="2.9" fill="#9CC4E8" opacity="0.85"/><path d="M7.4 18.2 H12.6 M10 15.4 V21" stroke="#fff" stroke-width="0.6"/><rect x="14.6" y="12.4" width="11.8" height="6.8" fill="#fff" stroke="#BDBDBD"/><path d="M16.2 12.4 V19.2 M24.8 12.4 V19.2" stroke="#BDBDBD"/><rect x="28.8" y="10.8" width="11.4" height="9.6" fill="#fff" stroke="#BDBDBD"/><path d="M28.8 13.4 H40.2 M28.8 15.8 H40.2 M28.8 18.2 H40.2 M32.6 10.8 V20.4 M36.4 10.8 V20.4" stroke="#BDBDBD" stroke-width="0.6"/><rect x="42.8" y="15" width="2.6" height="5.2" fill="#E2E2E2" stroke="#BDBDBD" stroke-width="0.5"/><rect x="46.2" y="11.2" width="3" height="9" fill="#fff" stroke="#BDBDBD" stroke-width="0.6"/><rect x="50" y="12.4" width="3.8" height="7.8" fill="#9CC4E8"/></g><rect x="83.5" y="682.5" width="158" height="89" fill="#fff" stroke="#C2C2C2" stroke-width="1"/><rect x="94.5" y="687.5" width="137.0" height="17.6" stroke="#2b2b2b" stroke-width="1" stroke-dasharray="2 1.5"/><rect x="94.5" y="705.7" width="69.0" height="9.8" stroke="#2b2b2b" stroke-width="1" stroke-dasharray="2 1.5"/><path d="M163.5 705.7 H231.5 V715.5 H163.5" stroke="#2b2b2b" stroke-width="1" stroke-dasharray="2 1.5"/><rect x="94.5" y="717.3" width="69.0" height="45.9" stroke="#2b2b2b" stroke-width="1" stroke-dasharray="2 1.5"/><path d="M163.5 717.3 H231.5 V763.2 H163.5" stroke="#2b2b2b" stroke-width="1" stroke-dasharray="2 1.5"/><path d="M94.1 771.0 V763.3 H131.6 V771.0" stroke="#2b2b2b" stroke-width="1" stroke-dasharray="2 1.5"/><path d="M94.1 770.6 H131.6" stroke="#9a9a9a" stroke-width="0.8" stroke-dasharray="2 1.5"/><path d="M136.3 771.0 V763.3 H189.5 V771.0" stroke="#2b2b2b" stroke-width="1" stroke-dasharray="2 1.5"/><path d="M136.3 770.6 H189.5" stroke="#9a9a9a" stroke-width="0.8" stroke-dasharray="2 1.5"/><path d="M194.3 771.0 V763.3 H232 V771.0" stroke="#2b2b2b" stroke-width="1" stroke-dasharray="2 1.5"/><path d="M194.3 770.6 H232" stroke="#9a9a9a" stroke-width="0.8" stroke-dasharray="2 1.5"/><path d="M96 766.4 H104 M161 766.4 H166 M227 766.4 H230" stroke="#c8c8c8" stroke-width="0.7"/><g transform="translate(100.6 728.4)" stroke-width="0.8"><rect x="0.4" y="0.8" width="11.8" height="7" fill="#fff" stroke="#BDBDBD"/><path d="M1 7 L4.4 3.4 L7 6 L8.4 4.6 L11 7" stroke="#BDBDBD"/><circle cx="10" cy="7.8" r="2.9" fill="#9CC4E8" opacity="0.85"/><path d="M7.4 7.8 H12.6 M10 5 V10.6" stroke="#fff" stroke-width="0.6"/><rect x="14.6" y="0.8" width="11.8" height="7" fill="#fff" stroke="#BDBDBD"/><path d="M15.2 7 L18.6 3.4 L21 6" stroke="#BDBDBD"/><rect x="19.4" y="4.8" width="7.6" height="4.6" fill="#DCEBF8" stroke="#9CC4E8"/><path d="M22 10.4 H24.6" stroke="#9CC4E8"/><path d="M28.8 3.6 C30 6.4 33.4 7.4 36 6 C38.6 4.8 38 2.6 40.2 2.4 C39.4 0 35.4 -0.6 34.4 2.4 C32.6 4 30.6 4.2 28.8 3.6Z" fill="#6FA8DC" opacity="0.9"/><path d="M32 9.4 C33 6 36.6 5 40 5.4 C39.6 8.4 36 9.8 32 9.4Z" fill="#fff" stroke="#BDBDBD"/><path d="M42.4 0.8 H50.6 L54.2 4.6 H50 V7 H42.4 L45 4Z" fill="#A8DDB4"/><rect x="46.8" y="4.8" width="8" height="4.2" fill="#fff" stroke="#BDBDBD"/><path d="M48 6.2 H53.6 M48 7.6 H53.6" stroke="#BDBDBD" stroke-width="0.5"/><path d="M0.8 13 L5.4 10.8 L11.8 12.6 V17.4 L7 19.6 L0.8 17.6Z M0.8 13 L7 14.8 L11.8 12.6 M7 14.8 V19.6" fill="#fff" stroke="#BDBDBD"/><circle cx="10" cy="18.2" r="2.9" fill="#9CC4E8" opacity="0.85"/><path d="M7.4 18.2 H12.6 M10 15.4 V21" stroke="#fff" stroke-width="0.6"/><rect x="14.6" y="12.4" width="11.8" height="6.8" fill="#fff" stroke="#BDBDBD"/><path d="M16.2 12.4 V19.2 M24.8 12.4 V19.2" stroke="#BDBDBD"/><rect x="28.8" y="10.8" width="11.4" height="9.6" fill="#fff" stroke="#BDBDBD"/><path d="M28.8 13.4 H40.2 M28.8 15.8 H40.2 M28.8 18.2 H40.2 M32.6 10.8 V20.4 M36.4 10.8 V20.4" stroke="#BDBDBD" stroke-width="0.6"/><rect x="42.8" y="15" width="2.6" height="5.2" fill="#E2E2E2" stroke="#BDBDBD" stroke-width="0.5"/><rect x="46.2" y="11.2" width="3" height="9" fill="#fff" stroke="#BDBDBD" stroke-width="0.6"/><rect x="50" y="12.4" width="3.8" height="7.8" fill="#9CC4E8"/></g><g transform="translate(169.4 728.4)" stroke-width="0.8"><rect x="0.4" y="0.8" width="11.8" height="7" fill="#fff" stroke="#BDBDBD"/><path d="M1 7 L4.4 3.4 L7 6 L8.4 4.6 L11 7" stroke="#BDBDBD"/><circle cx="10" cy="7.8" r="2.9" fill="#9CC4E8" opacity="0.85"/><path d="M7.4 7.8 H12.6 M10 5 V10.6" stroke="#fff" stroke-width="0.6"/><rect x="14.6" y="0.8" width="11.8" height="7" fill="#fff" stroke="#BDBDBD"/><path d="M15.2 7 L18.6 3.4 L21 6" stroke="#BDBDBD"/><rect x="19.4" y="4.8" width="7.6" height="4.6" fill="#DCEBF8" stroke="#9CC4E8"/><path d="M22 10.4 H24.6" stroke="#9CC4E8"/><path d="M28.8 3.6 C30 6.4 33.4 7.4 36 6 C38.6 4.8 38 2.6 40.2 2.4 C39.4 0 35.4 -0.6 34.4 2.4 C32.6 4 30.6 4.2 28.8 3.6Z" fill="#6FA8DC" opacity="0.9"/><path d="M32 9.4 C33 6 36.6 5 40 5.4 C39.6 8.4 36 9.8 32 9.4Z" fill="#fff" stroke="#BDBDBD"/><path d="M42.4 0.8 H50.6 L54.2 4.6 H50 V7 H42.4 L45 4Z" fill="#A8DDB4"/><rect x="46.8" y="4.8" width="8" height="4.2" fill="#fff" stroke="#BDBDBD"/><path d="M48 6.2 H53.6 M48 7.6 H53.6" stroke="#BDBDBD" stroke-width="0.5"/><path d="M0.8 13 L5.4 10.8 L11.8 12.6 V17.4 L7 19.6 L0.8 17.6Z M0.8 13 L7 14.8 L11.8 12.6 M7 14.8 V19.6" fill="#fff" stroke="#BDBDBD"/><circle cx="10" cy="18.2" r="2.9" fill="#9CC4E8" opacity="0.85"/><path d="M7.4 18.2 H12.6 M10 15.4 V21" stroke="#fff" stroke-width="0.6"/><rect x="14.6" y="12.4" width="11.8" height="6.8" fill="#fff" stroke="#BDBDBD"/><path d="M16.2 12.4 V19.2 M24.8 12.4 V19.2" stroke="#BDBDBD"/><rect x="28.8" y="10.8" width="11.4" height="9.6" fill="#fff" stroke="#BDBDBD"/><path d="M28.8 13.4 H40.2 M28.8 15.8 H40.2 M28.8 18.2 H40.2 M32.6 10.8 V20.4 M36.4 10.8 V20.4" stroke="#BDBDBD" stroke-width="0.6"/><rect x="42.8" y="15" width="2.6" height="5.2" fill="#E2E2E2" stroke="#BDBDBD" stroke-width="0.5"/><rect x="46.2" y="11.2" width="3" height="9" fill="#fff" stroke="#BDBDBD" stroke-width="0.6"/><rect x="50" y="12.4" width="3.8" height="7.8" fill="#9CC4E8"/></g><rect x="83.5" y="797.5" width="158" height="89" fill="#fff" stroke="#C2C2C2" stroke-width="1"/><rect x="94.5" y="802.5" width="137.0" height="18.5" stroke="#2b2b2b" stroke-width="1" stroke-dasharray="2 1.5"/></svg>
<span class="t2" style="left:596.35px;top:506.64px;font-size:83px;color:#000;transform-origin:0 70.26px;transform:scale(0.7615,0.955);-webkit-text-stroke:0.50px #fff;">C</span>
<span class="t2" style="left:641.93px;top:506.64px;font-size:83px;color:#000;transform-origin:0 70.26px;transform:scale(0.9500,1.0);-webkit-text-stroke:1.60px #fff;">l</span>
<span class="t2" style="left:660.52px;top:506.64px;font-size:83px;color:#000;transform-origin:0 70.26px;transform:scale(0.9500,0.92);-webkit-text-stroke:1.60px #fff;">i</span>
<span class="t2" style="left:681.28px;top:506.64px;font-size:83px;color:#000;transform-origin:0 70.26px;transform:scale(0.8056,0.92);-webkit-text-stroke:0.52px #fff;">c</span>
<span class="t2" style="left:718.63px;top:506.64px;font-size:83px;color:#000;transform-origin:0 70.26px;transform:scale(0.7944,1.0);-webkit-text-stroke:0.50px #fff;">k</span>
<span class="t2" style="left:772.34px;top:506.64px;font-size:83px;color:#000;transform-origin:0 70.26px;transform:scale(1.1800,0.965);-webkit-text-stroke:2.30px #fff;">t</span>
<span class="t2" style="left:800.66px;top:506.64px;font-size:83px;color:#000;transform-origin:0 70.26px;transform:scale(0.9605,0.92);-webkit-text-stroke:1.67px #fff;">o</span>
<span class="t2" style="left:864.47px;top:506.64px;font-size:83px;color:#000;transform-origin:0 70.26px;transform:scale(0.9079,0.92);-webkit-text-stroke:1.32px #fff;">e</span>
<span class="t2" style="left:908.01px;top:506.64px;font-size:83px;color:#000;transform-origin:0 70.26px;transform:scale(0.9222,1.0);-webkit-text-stroke:1.42px #fff;">d</span>
<span class="t2" style="left:952.23px;top:506.64px;font-size:83px;color:#000;transform-origin:0 70.26px;transform:scale(0.9500,0.92);-webkit-text-stroke:1.60px #fff;">i</span>
<span class="t2" style="left:969.63px;top:506.64px;font-size:83px;color:#000;transform-origin:0 70.26px;transform:scale(1.1850,0.965);-webkit-text-stroke:2.30px #fff;">t</span>
<span class="t2" style="left:1018.27px;top:506.64px;font-size:83px;color:#000;transform-origin:0 70.26px;transform:scale(1.0473,0.955);-webkit-text-stroke:2.16px #fff;">M</span>
<span class="t2" style="left:1093.56px;top:506.64px;font-size:83px;color:#000;transform-origin:0 70.26px;transform:scale(0.6814,0.92);-webkit-text-stroke:0.50px #fff;">a</span>
<span class="t2" style="left:1132.59px;top:506.64px;font-size:83px;color:#000;transform-origin:0 70.26px;transform:scale(0.7361,0.92);-webkit-text-stroke:0.50px #fff;">s</span>
<span class="t2" style="left:1162.64px;top:506.64px;font-size:83px;color:#000;transform-origin:0 70.26px;transform:scale(1.1800,0.965);-webkit-text-stroke:2.30px #fff;">t</span>
<span class="t2" style="left:1189.94px;top:506.64px;font-size:83px;color:#000;transform-origin:0 70.26px;transform:scale(0.9158,0.92);-webkit-text-stroke:1.38px #fff;">e</span>
<span class="t2" style="left:1233.20px;top:506.64px;font-size:83px;color:#000;transform-origin:0 70.26px;transform:scale(1.1000,0.92);-webkit-text-stroke:2.30px #fff;">r</span>
<span class="t2" style="left:1281.57px;top:506.64px;font-size:83px;color:#000;transform-origin:0 70.26px;transform:scale(1.1650,0.965);-webkit-text-stroke:2.30px #fff;">t</span>
<span class="t2" style="left:1310.40px;top:506.64px;font-size:83px;color:#000;transform-origin:0 70.26px;transform:scale(1.0333,0.92);-webkit-text-stroke:2.08px #fff;">i</span>
<span class="t2" style="left:1328.67px;top:506.64px;font-size:83px;color:#000;transform-origin:0 70.26px;transform:scale(1.1650,0.965);-webkit-text-stroke:2.30px #fff;">t</span>
<span class="t2" style="left:1358.22px;top:506.64px;font-size:83px;color:#000;transform-origin:0 70.26px;transform:scale(0.9500,1.0);-webkit-text-stroke:1.60px #fff;">l</span>
<span class="t2" style="left:1377.02px;top:506.64px;font-size:83px;color:#000;transform-origin:0 70.26px;transform:scale(0.8947,0.92);-webkit-text-stroke:1.23px #fff;">e</span>
<span class="t2" style="left:1438.86px;top:506.64px;font-size:83px;color:#000;transform-origin:0 70.26px;transform:scale(0.7472,0.92);-webkit-text-stroke:0.50px #fff;">s</span>
<span class="t2" style="left:1470.12px;top:506.64px;font-size:83px;color:#000;transform-origin:0 70.26px;transform:scale(1.1400,0.965);-webkit-text-stroke:2.30px #fff;">t</span>
<span class="t2" style="left:1497.11px;top:506.64px;font-size:83px;color:#000;transform-origin:0 70.26px;transform:scale(0.9474,0.92);-webkit-text-stroke:1.58px #fff;">y</span>
<span class="t2" style="left:1537.42px;top:506.64px;font-size:83px;color:#000;transform-origin:0 70.26px;transform:scale(0.9500,1.0);-webkit-text-stroke:1.60px #fff;">l</span>
<span class="t2" style="left:1556.20px;top:506.64px;font-size:83px;color:#000;transform-origin:0 70.26px;transform:scale(0.9000,0.92);-webkit-text-stroke:1.27px #fff;">e</span>
<span class="t2" style="left:868.92px;top:621.21px;font-size:30px;color:#000;transform-origin:0 25.39px;transform:scale(0.9750,1.0);-webkit-text-stroke:0.30px #fff;">Click</span>
<span class="t2" style="left:940.53px;top:621.21px;font-size:30px;color:#000;transform-origin:0 25.39px;transform:scale(1.1696,1.0);-webkit-text-stroke:0.30px #fff;">to</span>
<span class="t2" style="left:977.40px;top:621.21px;font-size:30px;color:#000;transform-origin:0 25.39px;transform:scale(1.0979,1.0);-webkit-text-stroke:0.30px #fff;">edit</span>
<span class="t2" style="left:1039.37px;top:621.21px;font-size:30px;color:#000;transform-origin:0 25.39px;transform:scale(1.0663,1.0);-webkit-text-stroke:0.30px #fff;">Master</span>
<span class="t2" style="left:1145.79px;top:621.21px;font-size:30px;color:#000;transform-origin:0 25.39px;transform:scale(1.1075,1.0);-webkit-text-stroke:0.30px #fff;">subtitle</span>
<span class="t2" style="left:1258.75px;top:621.21px;font-size:30px;color:#000;transform-origin:0 25.39px;transform:scale(1.0483,1.0);-webkit-text-stroke:0.30px #fff;">style</span>
<span class="t gp" style="left:873px;top:16.00px;font-size:15.2px;color:#fff;transform:scaleX(0.9643);white-space:pre;">MagicSlides  -  PowerPoint</span>
<span class="t gp" style="left:1591px;top:15.00px;font-size:13.5px;color:#fff;transform:scaleX(0.9085);">Ajay Sai</span>
<span class="t gp" style="left:1654px;top:16.00px;font-size:12px;color:#66727f;transform:scaleX(0.9366);">AS</span>
<span class="t gp" style="left:25px;top:55.00px;font-size:16px;color:#fff;transform:scaleX(0.8921);">File</span>
<span class="t gp" style="left:88px;top:56.00px;font-size:16px;color:#fff;transform:scaleX(0.9222);">Slide Master</span>
<span class="t gp" style="left:265px;top:56.00px;font-size:16px;color:#fff;transform:scaleX(0.8747);">Insert</span>
<span class="t gp" style="left:328px;top:56.00px;font-size:16px;color:#fff;transform:scaleX(0.9105);">Draw</span>
<span class="t gp" style="left:390px;top:56.00px;font-size:16px;color:#fff;transform:scaleX(0.8885);">Transitions</span>
<span class="t gp" style="left:487px;top:56.00px;font-size:16px;color:#fff;transform:scaleX(0.9349);">Animations</span>
<span class="t gp" style="left:589px;top:56.00px;font-size:16px;color:#fff;transform:scaleX(0.8767);">Review</span>
<span class="t gp" style="left:662px;top:56.00px;font-size:16px;color:#fff;transform:scaleX(0.9305);">View</span>
<span class="t gp" style="left:722px;top:56.00px;font-size:16px;color:#fff;transform:scaleX(0.9323);">Developer</span>
<span class="t gp" style="left:818px;top:56.00px;font-size:16px;color:#fff;transform:scaleX(0.9725);">Help</span>
<span class="t gp" style="left:197px;top:56.00px;font-size:16px;color:#B7472A;transform:scaleX(0.9698);">Home</span>
<span class="t gp" style="left:915px;top:55.00px;font-size:16px;color:#fff;transform:scaleX(0.9573);">Tell me what you want to do</span>
<span class="t gp" style="left:19px;top:134.00px;font-size:16px;color:#262626;transform:scaleX(0.8309);">Paste</span>
<span class="t gp" style="left:90px;top:92.00px;font-size:16px;color:#A9A9A9;transform:scaleX(0.8833);">Cut</span>
<span class="t gp" style="left:90px;top:121.00px;font-size:16px;color:#A9A9A9;transform:scaleX(0.9101);">Copy</span>
<span class="t gp" style="left:90px;top:150.00px;font-size:16px;color:#A9A9A9;transform:scaleX(0.9073);">Format Painter</span>
<span class="t gp" style="left:63px;top:179.00px;font-size:13.5px;color:#262626;transform:scaleX(1.0035);">Clipboard</span>
<span class="t gp" style="left:226px;top:134.00px;font-size:16px;color:#262626;transform:scaleX(0.9370);">New</span>
<span class="t gp" style="left:217px;top:154.00px;font-size:16px;color:#262626;transform:scaleX(0.8994);">Slide</span>
<span class="t gp" style="left:295px;top:102.00px;font-size:16px;color:#A9A9A9;transform:scaleX(0.8757);">Reset</span>
<span class="t gp" style="left:295px;top:141.00px;font-size:16px;color:#A9A9A9;transform:scaleX(0.9600);">Delete</span>
<span class="t gp" style="left:263px;top:179.00px;font-size:13.5px;color:#262626;transform:scaleX(0.9244);">Slides</span>
<span class="t gp" style="left:519px;top:179.00px;font-size:13.5px;color:#262626;transform:scaleX(0.9254);">Font</span>
<span class="t gp" style="left:896px;top:179.00px;font-size:13.5px;color:#262626;transform:scaleX(0.9675);">Paragraph</span>
<span class="t gp" style="left:1342px;top:179.00px;font-size:13.5px;color:#262626;transform:scaleX(0.9691);">Drawing</span>
<span class="t gp" style="left:1655px;top:179.00px;font-size:13.5px;color:#262626;transform:scaleX(1.0901);">Editing</span>
<span class="t gp" style="left:983px;top:92.00px;font-size:16px;color:#A9A9A9;transform:scaleX(0.9492);">Text Direction</span>
<span class="t gp" style="left:983px;top:121.00px;font-size:16px;color:#A9A9A9;transform:scaleX(0.9554);">Align Text</span>
<span class="t gp" style="left:983px;top:150.00px;font-size:16px;color:#A9A9A9;transform:scaleX(0.9337);">Convert to SmartArt</span>
<span class="t gp" style="left:1342px;top:134.00px;font-size:16px;color:#262626;transform:scaleX(0.9311);">Arrange</span>
<span class="t gp" style="left:1408px;top:134.00px;font-size:16px;color:#A9A9A9;transform:scaleX(0.9290);">Quick</span>
<span class="t gp" style="left:1400px;top:154.00px;font-size:16px;color:#A9A9A9;transform:scaleX(0.8490);">Styles</span>
<span class="t gp" style="left:1483px;top:92.00px;font-size:16px;color:#A9A9A9;transform:scaleX(0.8994);">Shape Fill</span>
<span class="t gp" style="left:1483px;top:121.00px;font-size:16px;color:#A9A9A9;transform:scaleX(0.9171);">Shape Outline</span>
<span class="t gp" style="left:1483px;top:150.00px;font-size:16px;color:#A9A9A9;transform:scaleX(0.8960);">Shape Effects</span>
<span class="t gp" style="left:1644px;top:92.00px;font-size:16px;color:#262626;transform:scaleX(0.8996);">Find</span>
<span class="t gp" style="left:1644px;top:121.00px;font-size:16px;color:#262626;transform:scaleX(0.9199);">Replace</span>
<span class="t gp" style="left:1644px;top:150.00px;font-size:16px;color:#262626;transform:scaleX(0.8995);">Select</span>
<span class="t gp" style="left:375px;top:140.00px;font-size:17px;color:#A9A9A9;transform:scaleX(0.8957);font-weight:bold;">B</span>
<span class="t gp" style="left:407.5px;top:139.00px;font-size:17px;color:#A9A9A9;transform:scaleX(1.3585);font-style:italic;font-family:'Liberation Serif',serif;font-weight:bold;">I</span>
<span class="t gp" style="left:436px;top:141.00px;font-size:15.5px;color:#A9A9A9;transform:scaleX(0.9640);font-weight:bold;">U</span>
<span class="t gp" style="left:466px;top:140.00px;font-size:17px;color:#A9A9A9;transform:scaleX(1.0579);font-weight:bold;text-shadow:1px 1px 1px #ccc;">S</span>
<span class="t gp" style="left:492px;top:142.00px;font-size:13px;color:#A9A9A9;transform:scaleX(0.9538);text-decoration:line-through;">abc</span>
<span class="t gp" style="left:524px;top:138.00px;font-size:13px;color:#A9A9A9;transform:scaleX(1.0372);">AV</span>
<span class="t gp" style="left:571px;top:141.00px;font-size:15px;color:#A9A9A9;transform:scaleX(0.9804);">Aa</span>
<span class="t gp" style="left:631.4px;top:103.00px;font-size:14.5px;color:#A9A9A9;transform:scaleX(1.0110);font-weight:bold;-webkit-text-stroke:0.5px #F3F3F3;">A</span>
<span class="t gp" style="left:660.4px;top:104.00px;font-size:13.5px;color:#A9A9A9;transform:scaleX(1.0462);font-weight:bold;-webkit-text-stroke:0.5px #F3F3F3;">A</span>
<span class="t gp" style="left:677.5px;top:137.00px;font-size:17px;color:#A9A9A9;transform:scaleX(1.0585);font-weight:bold;">A</span>
<span class="t" style="left:625.5px;top:135.67px;font-size:11.5px;color:#A9A9A9;transform:scaleX(0.9455);">ab</span>
<span class="t" style="left:105.3px;top:256.84px;font-size:9.4px;color:#111;transform:scaleX(0.9630);">Click to edit Master title style</span>
<span class="t" style="left:136.4px;top:270.46px;font-size:3px;color:#777;transform:scaleX(1.2179);">Click to edit Master subtitle style</span>
<span class="t" style="left:95.7px;top:347.17px;font-size:7px;color:#858585;transform:scaleX(0.9504);">Click to edit Master title style</span>
<span class="t" style="left:96.3px;top:362.81px;font-size:4.0px;color:#3a3a3a;transform:scaleX(1.0537);">• Click to edit Master text styles</span>
<span class="t" style="left:101.8px;top:368.72px;font-size:3.4px;color:#555;transform:scaleX(1.0721);">• Second level</span>
<span class="t" style="left:108.0px;top:374.76px;font-size:3.0px;color:#777;transform:scaleX(1.0847);">• Third level</span>
<span class="t" style="left:113.89999999999999px;top:378.73px;font-size:2.8px;color:#666;transform:scaleX(1.0260);">• Fourth level</span>
<span class="t" style="left:119.69999999999999px;top:382.83px;font-size:2.8px;color:#777;transform:scaleX(1.0412);">• Fifth level</span>
<span class="t" style="left:96.1px;top:499.74px;font-size:9.4px;color:#111;transform:scaleX(0.9613);">Click to edit Master title style</span>
<span class="t" style="left:96.3px;top:512.26px;font-size:3px;color:#777;transform:scaleX(1.1943);">Click to edit Master text styles</span>
<span class="t" style="left:95.7px;top:577.17px;font-size:7px;color:#858585;transform:scaleX(0.9504);">Click to edit Master title style</span>
<span class="t" style="left:96.3px;top:592.81px;font-size:4.0px;color:#3a3a3a;transform:scaleX(1.0537);">• Click to edit Master text styles</span>
<span class="t" style="left:101.8px;top:598.72px;font-size:3.4px;color:#555;transform:scaleX(1.0721);">• Second level</span>
<span class="t" style="left:108.0px;top:604.76px;font-size:3.0px;color:#777;transform:scaleX(1.0847);">• Third level</span>
<span class="t" style="left:113.89999999999999px;top:608.73px;font-size:2.8px;color:#666;transform:scaleX(1.0260);">• Fourth level</span>
<span class="t" style="left:165.09999999999997px;top:592.81px;font-size:4.0px;color:#3a3a3a;transform:scaleX(1.0537);">• Click to edit Master text styles</span>
<span class="t" style="left:170.59999999999997px;top:598.72px;font-size:3.4px;color:#555;transform:scaleX(1.0721);">• Second level</span>
<span class="t" style="left:176.79999999999998px;top:604.76px;font-size:3.0px;color:#777;transform:scaleX(1.0847);">• Third level</span>
<span class="t" style="left:182.7px;top:608.73px;font-size:2.8px;color:#666;transform:scaleX(1.0260);">• Fourth level</span>
<span class="t" style="left:95.7px;top:692.17px;font-size:7px;color:#858585;transform:scaleX(0.9504);">Click to edit Master title style</span>
<span class="t" style="left:96.1px;top:710.95px;font-size:3.6px;color:#222;transform:scaleX(0.9489);font-weight:bold;">Click to edit Master text styles</span>
<span class="t" style="left:165.2px;top:710.95px;font-size:3.6px;color:#222;transform:scaleX(0.9470);font-weight:bold;">Click to edit Master text styles</span>
<span class="t" style="left:96.3px;top:716.61px;font-size:4.0px;color:#3a3a3a;transform:scaleX(1.0537);">• Click to edit Master text styles</span>
<span class="t" style="left:101.8px;top:721.52px;font-size:3.4px;color:#555;transform:scaleX(1.0721);">• Second level</span>
<span class="t" style="left:108.0px;top:727.16px;font-size:3.0px;color:#777;transform:scaleX(1.0847);">• Third level</span>
<span class="t" style="left:165.5px;top:716.61px;font-size:4.0px;color:#3a3a3a;transform:scaleX(1.0537);">• Click to edit Master text styles</span>
<span class="t" style="left:171.0px;top:721.52px;font-size:3.4px;color:#555;transform:scaleX(1.0721);">• Second level</span>
<span class="t" style="left:177.20000000000002px;top:727.16px;font-size:3.0px;color:#777;transform:scaleX(1.0847);">• Third level</span>
<span class="t" style="left:95.7px;top:807.17px;font-size:7px;color:#858585;transform:scaleX(0.9504);">Click to edit Master title style</span>
</div></body></html>
